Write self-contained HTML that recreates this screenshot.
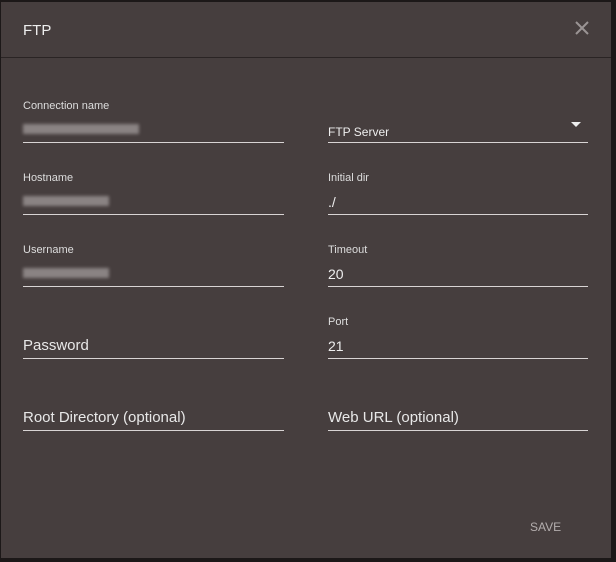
<!DOCTYPE html>
<html><head><style>
html,body{margin:0;padding:0;width:616px;height:562px;overflow:hidden;background:#1c1818;font-family:"Liberation Sans",sans-serif;}
.dlg{position:absolute;left:1px;top:2px;width:610px;height:556px;background:#463e3e;}
.hdr{position:absolute;left:0;top:0;width:610px;height:55px;border-bottom:1px solid #2a2424;}
.t{position:absolute;left:22px;top:20px;color:#eee;font-size:15px;}
.x{position:absolute;left:574px;top:19px;}
.f{position:absolute;width:261px;border-bottom:1px solid #d8d4d4;}
.lbl{position:absolute;color:#ddd;font-size:11px;}
.val{position:absolute;color:#eee;font-size:14px;}
.ph{position:absolute;color:#e8e8e8;font-size:15px;}
.blur{position:absolute;height:10px;background:#8a8383;filter:blur(1.5px);}
</style></head><body>
<div class="dlg">
<div class="hdr"><div class="t">FTP</div>
<svg class="x" width="14" height="14" viewBox="0 0 14 14"><path d="M1 1L13 13M13 1L1 13" stroke="#9a9494" stroke-width="2"/></svg></div>
</div>
<div class="lbl" style="left:23px;top:100px">Connection name</div>
<div class="blur" style="left:23px;top:124px;width:116px"></div>
<div class="f" style="left:23px;top:142px"></div>
<div class="val" style="left:328px;top:125px;font-size:12px">FTP Server</div>
<svg style="position:absolute;left:571px;top:122px" width="10" height="6"><path d="M0 0H10L5 5Z" fill="#eee"/></svg>
<div class="f" style="left:328px;top:142px;width:260px"></div>

<div class="lbl" style="left:23px;top:172px">Hostname</div>
<div class="blur" style="left:23px;top:196px;width:86px"></div>
<div class="f" style="left:23px;top:214px"></div>
<div class="lbl" style="left:328px;top:172px">Initial dir</div>
<div class="val" style="left:328px;top:194px">./</div>
<div class="f" style="left:328px;top:214px;width:260px"></div>

<div class="lbl" style="left:23px;top:244px">Username</div>
<div class="blur" style="left:23px;top:268px;width:86px"></div>
<div class="f" style="left:23px;top:286px"></div>
<div class="lbl" style="left:328px;top:244px">Timeout</div>
<div class="val" style="left:328px;top:266px">20</div>
<div class="f" style="left:328px;top:286px;width:260px"></div>

<div class="ph" style="left:23px;top:337px">Password</div>
<div class="f" style="left:23px;top:358px"></div>
<div class="lbl" style="left:328px;top:316px">Port</div>
<div class="val" style="left:328px;top:338px">21</div>
<div class="f" style="left:328px;top:358px;width:260px"></div>

<div class="ph" style="left:23px;top:409px">Root Directory (optional)</div>
<div class="f" style="left:23px;top:430px"></div>
<div class="ph" style="left:328px;top:409px">Web URL (optional)</div>
<div class="f" style="left:328px;top:430px;width:260px"></div>

<div style="position:absolute;left:530px;top:520px;color:#b3adad;font-size:12px">SAVE</div>
</body></html>
